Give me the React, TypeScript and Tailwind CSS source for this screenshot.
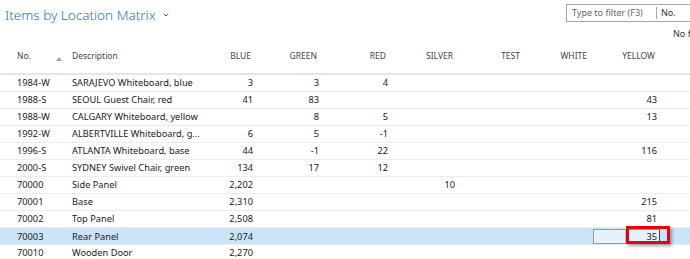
import { ChevronDown } from 'lucide-react';

type Row = {
    no: string;
    desc: string;
    vals: (string | null)[];
    selected?: boolean;
};

const columns = ['BLUE', 'GREEN', 'RED', 'SILVER', 'TEST', 'WHITE', 'YELLOW'];

const rows: Row[] = [
    { no: '1984-W', desc: 'SARAJEVO Whiteboard, blue', vals: ['3', '3', '4', null, null, null, null] },
    { no: '1988-S', desc: 'SEOUL Guest Chair, red', vals: ['41', '83', null, null, null, null, '43'] },
    { no: '1988-W', desc: 'CALGARY Whiteboard, yellow', vals: [null, '8', '5', null, null, null, '13'] },
    { no: '1992-W', desc: 'ALBERTVILLE Whiteboard, g...', vals: ['6', '5', '-1', null, null, null, null] },
    { no: '1996-S', desc: 'ATLANTA Whiteboard, base', vals: ['44', '-1', '22', null, null, null, '116'] },
    { no: '2000-S', desc: 'SYDNEY Swivel Chair, green', vals: ['134', '17', '12', null, null, null, null] },
    { no: '70000', desc: 'Side Panel', vals: ['2,202', null, null, '10', null, null, null] },
    { no: '70001', desc: 'Base', vals: ['2,310', null, null, null, null, null, '215'] },
    { no: '70002', desc: 'Top Panel', vals: ['2,508', null, null, null, null, null, '81'] },
    { no: '70003', desc: 'Rear Panel', vals: ['2,074', null, null, null, null, null, '35'], selected: true },
    { no: '70010', desc: 'Wooden Door', vals: ['2,270', null, null, null, null, null, null] },
];

const grid = 'grid grid-cols-[72px_120px_61px_66px_69px_67px_67px_67px_68px_1fr]';

export default function App() {
    return (
        <div className="w-[690px] h-[259px] overflow-hidden bg-white text-[#212121] font-['Noto_Sans',sans-serif]">
            {/* title + filter */}
            <div className="flex h-[27px] items-start">
                <div className="flex items-center gap-[6px] pl-[5px] pt-[5px]">
                    <span className="text-[13.5px] font-light leading-[20px] text-[#1a73c7]">Items by Location Matrix</span>
                    <ChevronDown className="h-[8px] w-[8px] text-[#555]" strokeWidth={3} />
                </div>
                <div className="ml-auto mt-[4px] flex h-[18px] w-[124px] shrink-0 items-center overflow-hidden whitespace-nowrap border border-r-0 border-[#a8a8a8] text-[9px]">
                    <span className="w-[90px] shrink-0 border-r border-[#a8a8a8] pl-[5px] leading-[12px] text-[#666]">Type to filter (F3)</span>
                    <span className="pl-[4px] text-[#333]">No.</span>
                </div>
            </div>
            <div className="h-[13px] overflow-hidden whitespace-nowrap pl-[673px] text-[9px] leading-[13px] text-[#333]">
                No filters applied
            </div>

            {/* header */}
            <div className={`${grid} h-[35px] items-start border-b-2 border-[#e6e6e6] pt-[9px] text-[8.5px] leading-[14px] text-[#444]`}>
                <div className="flex items-center pl-[17px]">
                    <span>No.</span>
                    <svg className="ml-[25px] mt-[5px]" width="6" height="4" viewBox="0 0 6 4">
                        <path d="M0 4 L3 0 L6 4 Z" fill="#a0a0a0" />
                    </svg>
                </div>
                <div>Description</div>
                {columns.map((c) => (
                    <div key={c} className="pr-[2px] text-right">
                        {c}
                    </div>
                ))}
                <div />
            </div>

            {/* rows */}
            <div className="text-[9.25px]">
                {rows.map((r) => (
                    <div
                        key={r.no}
                        className={`${grid} h-[17px] items-center border-b border-[#ececec] ${r.selected ? 'bg-[#cce4f7]' : ''}`}
                    >
                        <div className="pl-[17px]">{r.no}</div>
                        <div className="whitespace-nowrap">{r.desc}</div>
                        {r.vals.map((v, i) => {
                            if (r.selected && i === 6) {
                                return (
                                    <div key={i} className="relative h-[17px]">
                                        <div className="ml-[4px] mt-[1px] flex h-[15px] w-[67px]">
                                            <div className="w-[32px] border border-r-0 border-[#8f9aa5] bg-[#e5f1fb]" />
                                            <div className="w-[35px] border border-l-[#b8c4cf] border-y-[#8f9aa5] border-r-[#444] bg-[#e5f1fb] pr-[2px] text-right leading-[13px]">
                                                {v}
                                            </div>
                                        </div>
                                        <div className="absolute left-[37px] -top-[2px] h-[18px] w-[44px] border-[3px] border-[#e8000b] shadow-[2px_2px_3px_rgba(0,0,0,0.35)]" />
                                    </div>
                                );
                            }
                            return (
                                <div key={i} className="text-right">
                                    {v}
                                </div>
                            );
                        })}
                        <div />
                    </div>
                ))}
            </div>
        </div>
    );
}
